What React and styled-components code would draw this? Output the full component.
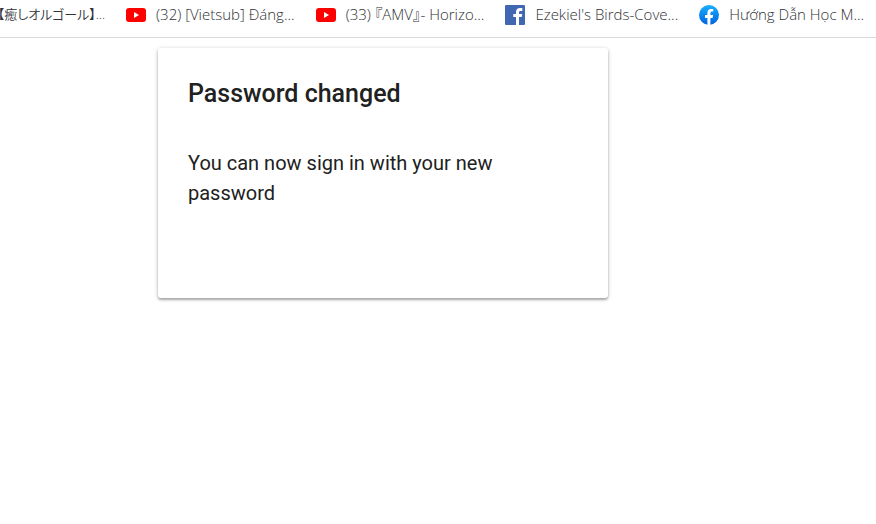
import React from "react";
import styled, { createGlobalStyle } from "styled-components";

const GlobalStyle = createGlobalStyle`
  * { box-sizing: border-box; }
  body { margin: 0; background: #fff; }
`;

const BookmarksBar = styled.nav`
  display: flex;
  gap: 21px;
  align-items: flex-start;
  height: 38px;
  padding-top: 4px;
  overflow: hidden;
  border-bottom: 1px solid #d9dadc;
  font-family: "Open Sans", "Noto Sans CJK JP", sans-serif;
  font-size: 15px;
  font-weight: 340;
  line-height: 20px;
  color: #303236;
`;

const Bookmark = styled.a`
  display: flex;
  flex: none;
  align-items: flex-start;
  justify-content: flex-end;
  gap: 10px;
  width: ${(p) => (p.$clipped ? "105px" : "auto")};
  font-size: ${(p) => (p.$clipped ? "13px" : "inherit")};
  color: inherit;
  text-decoration: none;
  white-space: nowrap;
  font-feature-settings: "palt";
`;

const Icon = styled.svg`
  flex: none;
  width: 20px;
  height: 20px;
  margin-top: 1px;
`;

const Page = styled.main`
  padding: 10px 158px;
`;

const Card = styled.section`
  max-width: 450px;
  min-height: 250px;
  padding: 30px;
  border-radius: 3px;
  background: #fff;
  box-shadow: 0 2px 2px rgba(0, 0, 0, 0.22), 0 1px 4px rgba(0, 0, 0, 0.24);
  font-family: Roboto, sans-serif;
  color: #212121;
`;

const Title = styled.h1`
  margin: 0 0 38px;
  font-size: 25px;
  font-weight: 500;
  line-height: 32px;
`;

const Message = styled.p`
  margin: 0;
  font-size: 20px;
  line-height: 30px;
`;

const YouTubeIcon = () => (
  <Icon viewBox="0 0 20 20" aria-hidden="true">
    <rect y="3" width="20" height="14" rx="3" fill="#f00" />
    <path d="M8 7v6l5-3z" fill="#fff" />
  </Icon>
);

const FacebookSquareIcon = () => (
  <Icon viewBox="0 0 20 20" aria-hidden="true">
    <rect width="20" height="20" rx="1" fill="#4267b2" />
    <path
      d="M11 20v-8H8.300V9H11V7c0-2.700 1.700-4 4-4h2.300v3h-1.600C14.300 6 14 6.700 14 7.600V9h3.200l-.5 3H14v8z"
      fill="#fff"
    />
  </Icon>
);

const FacebookRoundIcon = () => (
  <Icon viewBox="0 0 20 20" aria-hidden="true">
    <defs>
      <linearGradient id="facebookBlue" x1="0" y1="0" x2="0" y2="1">
        <stop offset="0" stopColor="#19afff" />
        <stop offset="1" stopColor="#0062e0" />
      </linearGradient>
    </defs>
    <circle cx="10" cy="10" r="10" fill="url(#facebookBlue)" />
    <path
      d="M8.400 19.900V13H6v-3h2.400V7.800c0-2.400 1.400-3.900 3.600-3.900.8 0 1.600.1 2.200.2v2.500h-1.300c-1.100 0-1.500.7-1.500 1.500V10h2.700l-.5 3h-2.200v6.900a10 10 0 0 1-3 0z"
      fill="#fff"
    />
  </Icon>
);

const bookmarks = [
  { label: "【癒しオルゴール】...", clipped: true },
  { label: "(32) [Vietsub] Đáng...", icon: YouTubeIcon },
  { label: "(33) 『AMV』- Horizo...", icon: YouTubeIcon },
  { label: "Ezekiel's Birds-Cove...", icon: FacebookSquareIcon },
  { label: "Hướng Dẫn Học M...", icon: FacebookRoundIcon },
];

export default function App() {
  return (
    <>
      <GlobalStyle />
      <BookmarksBar aria-label="Bookmarks">
        {bookmarks.map(({ label, icon: Glyph, clipped }) => (
          <Bookmark key={label} href="#" $clipped={clipped}>
            {Glyph && <Glyph />}
            <span>{label}</span>
          </Bookmark>
        ))}
      </BookmarksBar>
      <Page>
        <Card>
          <Title>Password changed</Title>
          <Message>You can now sign in with your new password</Message>
        </Card>
      </Page>
    </>
  );
}
